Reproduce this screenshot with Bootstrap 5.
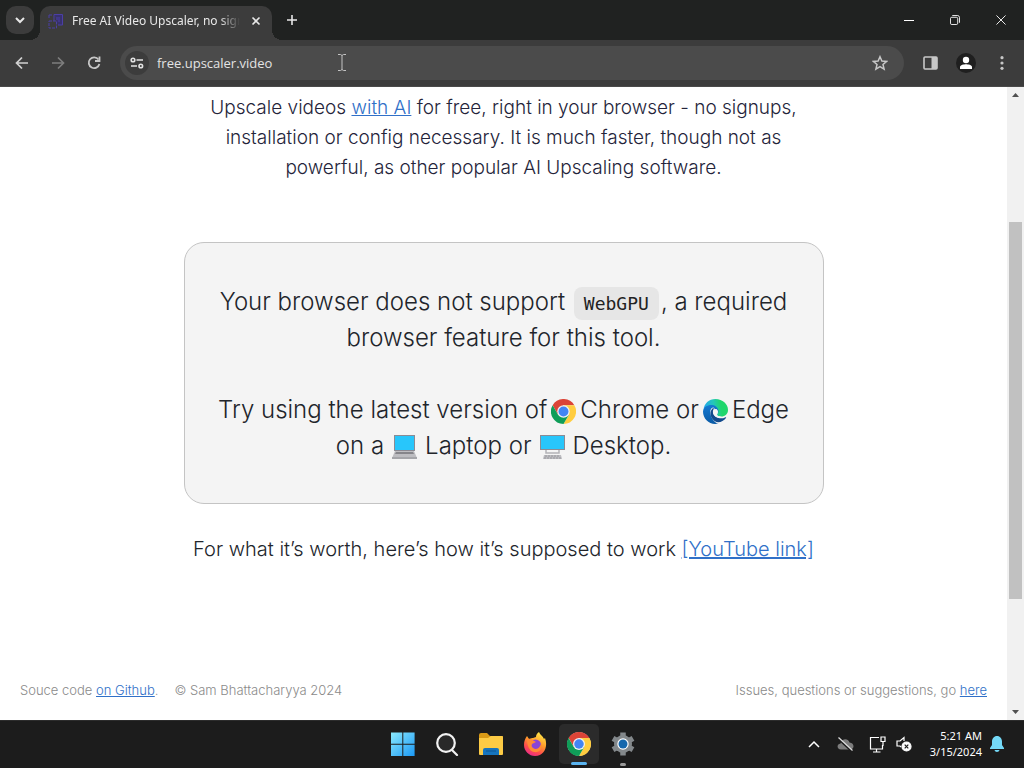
<!DOCTYPE html>
<html lang="en">
<head>
<meta charset="utf-8">
<meta name="viewport" content="width=device-width, initial-scale=1">
<title>Free AI Video Upscaler, no signup</title>
<link rel="stylesheet" href="https://cdn.jsdelivr.net/npm/bootstrap@5.3.0/dist/css/bootstrap.min.css">
<style>
  body { font-family: Inter, "Liberation Sans", sans-serif; font-weight: 300; color: #22252b; background: #fff; }
  svg { display: block; flex: none; }
  .chrome-ui, .taskbar { font-family: "Open Sans", "Noto Sans", sans-serif; font-weight: 400; }
  .plain { border: 0; padding: 0; background: none; color: inherit; display: flex; align-items: center; justify-content: center; flex: none; }

  .tabstrip { height: 40px; background: #202221; color: #e8e8e8; padding-left: 6px; }
  .tab-search { width: 28px; height: 28px; border-radius: 10px; background: #3c3c3c; margin-top: 6px; }
  .page-tab { position: relative; width: 232px; height: 34px; margin: 6px 0 0 6px; padding: 0 8px 4px; background: #3c3c3c; border-radius: 10px 10px 0 0; font-size: 12px; }
  .page-tab::before, .page-tab::after { content: ""; position: absolute; bottom: 0; width: 10px; height: 10px; }
  .page-tab::before { left: -10px; background: radial-gradient(circle at 0 0, transparent 10px, #3c3c3c 10px); }
  .page-tab::after { right: -10px; background: radial-gradient(circle at 100% 0, transparent 10px, #3c3c3c 10px); }
  .tab-title { overflow: hidden; white-space: nowrap; text-align: left; font-family: "Noto Sans", sans-serif; -webkit-mask-image: linear-gradient(90deg, #000 88%, transparent); mask-image: linear-gradient(90deg, #000 88%, transparent); }
  .tab-close { width: 16px; height: 16px; }
  .new-tab { width: 36px; height: 40px; margin-left: 2px; }
  .win-btn { width: 46px; height: 40px; color: #fff; }

  .toolbar { height: 47px; background: #3c3c3c; color: #c7c7c7; border-bottom: 1px solid #4a4a4a; padding: 0 4px; }
  .tool-btn { width: 36px; height: 34px; }
  .omnibox { position: relative; height: 34px; border-radius: 17px; background: #4b4b4b; padding: 0 6px 0 5px; }
  .site-info { width: 24px; height: 24px; border-radius: 50%; background: #3c3c3c; color: #e3e3e3; }
  .url-input { min-width: 0; border: 0; outline: 0; background: none; color: #e3e3e3; font-size: 13px; padding: 1px 0 0 8px; }
  .ibeam { position: absolute; left: 217px; top: 8px; }

  .page-body { padding: 6px 20px 20px; }
  .page-body a { color: #3070c8; }
  .intro { max-width: 600px; font-size: 19px; line-height: 30px; color: #24243a; margin: 0 auto 59px; }
  .notice { width: 100%; max-width: 640px; margin: 0 auto 30px; padding: 41px 28px 39px; border: 1px solid #c4c4c4; border-radius: 20px; background: #f4f4f4; font-size: 24px; line-height: 36px; }
  .notice p { margin: 0 0 36px; }
  .notice p:last-child { margin: 0; }
  .notice code { font: 400 18px/24px "DejaVu Sans Mono", monospace; color: #222; background: #e6e6e6; border-radius: 8px; padding: 6px 10px; margin: 0 2px; }
  .notice svg { display: inline-block; vertical-align: -6px; }
  .brand-icon { margin: 0 4px; }
  .device-icon { margin: 0 8px; }
  .worth { font-size: 20px; line-height: 30px; }
  .foot { font-size: 13px; line-height: 20px; color: #8a8a8a; }

  .scroll-col { width: 17px; background: #f1f1f1; flex: none; }
  .scroll-btn { height: 16px; }
  .thumb { flex: 377 0 0; margin: 0 2px; background: #c1c1c1; }

  .taskbar { display: grid; grid-template-columns: 1fr auto 1fr; height: 48px; background: #1c1c1c; color: #fff; border-top: 1px solid #2c2c2c; padding-bottom: 1px; }
  .app-row { padding-left: 1px; }
  .app-btn { position: relative; width: 44px; height: 46px; }
  .app-open { background: #2b2b2b; border-radius: 5px; width: 40px; height: 40px; margin: 3px 2px; }
  .run-mark { position: absolute; bottom: 1px; width: 6px; height: 3px; border-radius: 2px; background: #9a9a9a; }
  .app-open .run-mark { width: 16px; bottom: -1px; background: #5ab4f0; }
  .tray-btn { width: 32px; }
  .tray-volume { width: 20px; }
  .clock { font-family: "Noto Sans", sans-serif; font-size: 11px; line-height: 16px; margin: 0 8px 0 16px; }
</style>
</head>
<body>
<svg width="0" height="0" class="position-absolute" aria-hidden="true">
  <defs>
    <symbol id="chrome-logo" viewBox="0 0 48 48">
      <circle cx="24" cy="24" r="23.500" fill="#fff"/>
      <path d="M24 12H44.800A24 24 0 0 0 3.200 12L13.600 30Z" fill="#db4437"/>
      <path d="M34.400 30L24 48A24 24 0 0 0 44.800 12H24Z" fill="#ffcd40"/>
      <path d="M13.600 30L3.200 12A24 24 0 0 0 24 48L34.400 30Z" fill="#0f9d58"/>
      <circle cx="24" cy="24" r="12" fill="#f1f1f1"/>
      <circle cx="24" cy="24" r="9.500" fill="#4285f4"/>
    </symbol>
  </defs>
</svg>

<div class="d-flex flex-column min-vh-100">
  <header class="chrome-ui">
    <div class="tabstrip d-flex">
      <button class="plain tab-search" aria-label="Search tabs"><svg width="12" height="12" viewBox="0 0 12 12" fill="none" stroke="currentColor" stroke-width="2"><path d="M2 4l4 4 4-4"/></svg></button>
      <div class="page-tab d-flex align-items-center">
        <svg width="16" height="16" viewBox="0 0 16 16" fill="none" stroke="#4b3fa6"><path d="M6 1.500H14.500V12H10M6 1.500V8" fill="#38316e"/><path d="M1 8H8.500V15H1Z" stroke-dasharray="3 1"/><path d="M1 5V2H4M11 4V9M9 4V7" /></svg>
        <span class="tab-title flex-fill ms-2">Free AI Video Upscaler, no signup</span>
        <button class="plain ms-2 tab-close" aria-label="Close tab"><svg width="10" height="10" viewBox="0 0 10 10" stroke="currentColor" stroke-width="1.600"><path d="M1.500 1.500l7 7M8.500 1.500l-7 7"/></svg></button>
      </div>
      <button class="plain new-tab" aria-label="New tab"><svg width="12" height="12" viewBox="0 0 12 12" stroke="currentColor" stroke-width="1.600"><path d="M6 1v10M1 6h10"/></svg></button>
      <div class="d-flex ms-auto">
        <button class="plain win-btn" aria-label="Minimize"><svg width="10" height="10" stroke="currentColor"><path d="M0 5.500h10"/></svg></button>
        <button class="plain win-btn" aria-label="Restore"><svg width="10" height="10" viewBox="0 0 11 11" fill="none" stroke="currentColor"><rect x=".5" y="2.500" width="8" height="8" rx="1.500"/><path d="M2.500.5H8A2.500 2.500 0 0 1 10.500 3V8.500"/></svg></button>
        <button class="plain win-btn" aria-label="Close"><svg width="10" height="10" viewBox="0 0 11 11" stroke="currentColor"><path d="M.5.5l10 10M10.500.5l-10 10"/></svg></button>
      </div>
    </div>
    <div class="toolbar d-flex align-items-center">
      <button class="plain tool-btn" aria-label="Back"><svg width="14" height="14" viewBox="0 0 14 14" fill="none" stroke="#d0d0d0" stroke-width="1.700"><path d="M13 7H2M7 1.500L1.500 7 7 12.500"/></svg></button>
      <button class="plain tool-btn" aria-label="Forward"><svg width="14" height="14" viewBox="0 0 14 14" fill="none" stroke="#7d7d7d" stroke-width="1.700"><path d="M1 7h11M7 1.500L12.500 7 7 12.500"/></svg></button>
      <button class="plain tool-btn" aria-label="Reload"><svg width="14" height="14" viewBox="0 0 14 14" fill="none" stroke="currentColor" stroke-width="1.800"><path d="M11.500 3.500A5.400 5.400 0 1 0 12.400 8"/><path d="M12.500.5V5H8"/></svg></button>
      <div class="omnibox d-flex align-items-center flex-fill ms-2">
        <button class="plain site-info" aria-label="View site information"><svg width="14" height="12" viewBox="0 0 14 12" fill="none" stroke="currentColor" stroke-width="1.600"><circle cx="3" cy="3" r="1.800"/><path d="M6.500 3H13M1 9H7"/><circle cx="10.800" cy="9" r="1.800"/></svg></button>
        <input class="url-input flex-fill" type="text" value="free.upscaler.video" aria-label="Address and search bar">
        <svg class="ibeam" width="10" height="17" viewBox="0 0 10 17" fill="none" stroke="#c4c4c4"><path d="M1 .5H3.500L5 1.500 6.500.5H9M5 1.500v14M1 16.500H3.500L5 15.500 6.500 16.500H9"/></svg>
        <button class="plain tool-btn" aria-label="Bookmark this tab"><svg width="16" height="16" viewBox="0 0 16 16" fill="none" stroke="currentColor" stroke-width="1.500"><path d="M8 1.700L9.900 6l4.700.4-3.600 3.100 1.100 4.600L8 11.700l-4.100 2.400L5 9.500 1.400 6.400 6.100 6Z"/></svg></button>
      </div>
      <button class="plain tool-btn ms-2" aria-label="Side panel"><svg width="15" height="14" viewBox="0 0 15 14"><rect x="1" y="1" width="13" height="12" rx="1" fill="none" stroke="currentColor" stroke-width="1.600"/><path d="M8.500 1H14V13H8.500Z" fill="currentColor"/></svg></button>
      <button class="plain tool-btn" aria-label="Profile"><svg width="20" height="20" viewBox="0 0 20 20"><circle cx="10" cy="10" r="10" fill="#1f1f1f"/><g fill="#fff"><circle cx="10" cy="7" r="3.200"/><path d="M4 16V14C4 12 8 11.300 10 11.300S16 12 16 14V16Z"/></g></svg></button>
      <button class="plain tool-btn" aria-label="Menu"><svg width="4" height="14" viewBox="0 0 4 14" fill="currentColor"><circle cx="2" cy="1.700" r="1.600"/><circle cx="2" cy="7" r="1.600"/><circle cx="2" cy="12.300" r="1.600"/></svg></button>
    </div>
  </header>

  <div class="d-flex flex-fill">
    <main class="page-body d-flex flex-column flex-fill">
      <p class="intro text-center">Upscale videos <a href="#ai">with AI</a> for free, right in your browser - no signups, installation or config necessary. It is much faster, though not as powerful, as other popular AI Upscaling software.</p>
      <section class="notice text-center">
        <p>Your browser does not support <code>WebGPU</code>, a required browser feature for this tool.</p>
        <p>Try using the latest version of<svg class="brand-icon" width="25" height="25"><use href="#chrome-logo"/></svg>Chrome or<svg class="brand-icon" width="25" height="25" viewBox="0 0 50 50"><defs><linearGradient id="eg" x1="0" x2="1" y1=".3" y2=".2"><stop stop-color="#22a7ec"/><stop offset=".4" stop-color="#25c6bb"/><stop offset=".7" stop-color="#1fd66c"/></linearGradient><linearGradient id="eb" x1="0" x2="0" y1="0" y2="1"><stop stop-color="#1479d2"/><stop offset="1" stop-color="#0a5aa5"/></linearGradient></defs><path d="M1 22C2 9 12 0 25 0C39 0 50 10 50 22C50 30 44 35 37 35C31 35 27 33 28 31C31 28 31 24 28 20C22 11 9 11 1 22Z" fill="url(#eg)"/><path d="M0 25C1 15 10 11 19 12C26 13 31 19 31 25C31 28 28 30 28 31C22 26 26 18 20 17C13 18 13 31 19 40C22 45 27 49 31 49C14 53 0 41 0 25Z" fill="url(#eb)"/><path d="M20 18C12 25 14 37 23 44C31 50 40 45 46 38C47 36 46 36 44 37C36 41 23 38 20 28C19 24 21 21 22 19Z" fill="#124a8c"/><path d="M20 27C20 22 23 19 27 20C31 23 31 28 28 31C28 33 31 35 35 35L34 38C26 38 21 33 20 27Z" fill="#f4f4f4"/></svg>Edge
          on a<svg class="device-icon" width="25" height="25" viewBox="0 0 25 25"><path d="M2 0H23V16H2Z" fill="#8b8b94"/><path d="M3 1H22V15H3Z" fill="#28c6fb"/><path d="M3 16H22L25 23H0Z" fill="#bdbdc1"/><path d="M4 17H21L22 19H3Z" fill="#85858a"/><path d="M0 22H25V24H0Z" fill="#a5a6aa"/></svg>Laptop or<svg class="device-icon" width="25" height="25" viewBox="0 0 25 25"><path d="M0 0H25V15H0Z" fill="#8b8b94"/><path d="M1 1H24V14H1Z" fill="#28c6fb"/><path d="M6 15V18H19V15" fill="none" stroke="#b3b3b7" stroke-width="1.500"/><path d="M4 20H21L22 24H3Z" fill="#bdbdc1"/><path d="M5 21H20M4 23H21" stroke="#98989d" stroke-dasharray="2 1"/></svg>Desktop.</p>
      </section>
      <p class="worth text-center mb-4">For what it’s worth, here’s how it’s supposed to work <a href="#youtube">[YouTube link]</a></p>
      <footer class="foot d-flex justify-content-between mt-auto">
        <div class="d-flex gap-3"><span>Souce code <a href="#github">on Github</a>.</span><span>© Sam Bhattacharyya 2024</span></div>
        <div>Issues, questions or suggestions, go <a href="#issues">here</a></div>
      </footer>
    </main>
    <div class="scroll-col d-flex flex-column" aria-hidden="true">
      <div class="scroll-btn d-flex align-items-center justify-content-center"><svg width="7" height="4"><path d="M0 4L3.500 0 7 4Z" fill="#505050"/></svg></div>
      <div style="flex:119 0 0"></div>
      <div class="thumb"></div>
      <div style="flex:105 0 0"></div>
      <div class="scroll-btn d-flex align-items-center justify-content-center"><svg width="7" height="4"><path d="M0 0L3.500 4 7 0Z" fill="#505050"/></svg></div>
    </div>
  </div>

  <nav class="taskbar" aria-label="Taskbar">
    <div></div>
    <div class="app-row d-flex">
      <button class="plain app-btn" aria-label="Start"><svg width="24" height="24" viewBox="0 0 24 24"><defs><linearGradient id="wg" gradientUnits="userSpaceOnUse" x1="0" y1="0" x2="24" y2="24"><stop stop-color="#8ceafd"/><stop offset="1" stop-color="#1a98f5"/></linearGradient></defs><path d="M0 .5h11.300v11.300H0zM12.300.5H23.600v11.300H12.300zM0 12.800h11.300V24H0zM12.300 12.800H23.600V24H12.300z" fill="url(#wg)"/></svg></button>
      <button class="plain app-btn" aria-label="Search"><svg width="24" height="24" viewBox="0 0 24 24" fill="#292929" stroke="#f2f2f2" stroke-width="2.200"><path d="M17 18l5 5" stroke-linecap="round"/><circle cx="11" cy="11" r="8.800"/></svg></button>
      <button class="plain app-btn" aria-label="File Explorer"><svg width="26" height="24" viewBox="0 0 26 24"><path d="M1 3Q1 1 3 1H9L12 4H24Q25 4 25 6V12H1Z" fill="#d99a16"/><path d="M1 6H10L13 4H24Q25 4 25 5V22Q25 23 24 23H2Q1 23 1 22Z" fill="#fccb45"/><path d="M5 23V18Q5 16 7 16H19Q21 16 21 18V23Z" fill="#1674bd"/><path d="M8 19H18" stroke="#0c5492"/></svg></button>
      <button class="plain app-btn" aria-label="Firefox"><svg width="24" height="24" viewBox="0 0 24 24"><defs><linearGradient id="fg" x1=".8" y1="0" x2=".3" y2="1"><stop stop-color="#fff04b"/><stop offset=".45" stop-color="#ff9a2a"/><stop offset=".75" stop-color="#ff4a4e"/><stop offset="1" stop-color="#e92b8c"/></linearGradient></defs><path d="M1 13C1 9 2 7 4 4L6 7C8 6 9 6 10 6L13 5C13 3 14 1 16 0C17 3 20 4 21 7L22 6C25 14 22 24 12 24C6 24 1 19 1 13Z" fill="url(#fg)"/><circle cx="12.500" cy="13" r="5.500" fill="#8a45d6"/><path d="M4 7C7 6 9 8 13 10L9 12C8 14 9 16 12 17C15 17 17 15 18 12C20 17 16 21 11 20C6 19 4 13 4 7Z" fill="#ff8b35"/></svg></button>
      <button class="plain app-btn app-open" aria-label="Google Chrome"><svg width="24" height="24"><use href="#chrome-logo"/></svg><span class="run-mark"></span></button>
      <button class="plain app-btn" aria-label="Settings"><svg width="24" height="24" viewBox="0 0 24 24"><circle cx="12" cy="12" r="9" fill="#83888b"/><g stroke="#83888b" stroke-width="5.500"><path d="M12 .5V23.500M2 6.300L22 17.700M2 17.700L22 6.300"/></g><circle cx="12" cy="12" r="5.700" fill="#fff"/><circle cx="12" cy="12" r="4.500" fill="#1668ad"/></svg><span class="run-mark"></span></button>
    </div>
    <div class="d-flex align-items-center justify-content-end pe-3">
      <button class="plain tray-btn" aria-label="Show hidden icons"><svg width="12" height="8" viewBox="0 0 12 8" fill="none" stroke="currentColor" stroke-width="1.500"><path d="M1 7l5-5 5 5"/></svg></button>
      <button class="plain tray-btn" aria-label="OneDrive"><svg width="17" height="14" viewBox="0 0 17 14"><path d="M4 12.500C-.5 12.500-.5 7 3.500 6.500C5 1 11 1 12.500 5.500C18 6 17.500 12.500 13 12.500Z" fill="#7d7d7d"/><path d="M1.500 2L14 13.500" stroke="#1c1c1c" stroke-width="2"/><path d="M1.500.5L15.500 13.500" stroke="#e0e0e0" stroke-width="1.200"/></svg></button>
      <button class="plain tray-btn" aria-label="Network"><svg width="17" height="17" viewBox="0 0 17 17" fill="none" stroke="currentColor" stroke-width="1.200"><path d="M10 1.500H1.500V13H13.500V9M7.500 13V16M4 16H11.500M12 1H16V5.500H12ZM14 5.500V10"/></svg></button>
      <button class="plain tray-volume" aria-label="Volume muted"><svg width="16" height="16" viewBox="0 0 16 16" fill="none" stroke="currentColor" stroke-width="1.200"><path d="M8 5V1.500L4 5H1V10H4L5 11"/><circle cx="10.500" cy="10.500" r="4.500" fill="#fff"/><path d="M8.700 8.700l3.600 3.600M12.300 8.700l-3.600 3.600" stroke="#1c1c1c"/></svg></button>
      <button class="plain clock text-end"><span>5:21 AM<br>3/15/2024</span></button>
      <button class="plain" aria-label="Notifications"><svg class="me-1" width="14" height="16" viewBox="0 0 14 16" fill="#74d9f7"><path d="M7 0C4 0 2 2.500 2 5.500V9L0 12V13H14V12L12 9V5.500C12 2.500 10 0 7 0ZM4.500 14H9.500C9 16.600 5 16.600 4.500 14Z"/></svg></button>
    </div>
  </nav>
</div>
<script src="https://cdn.jsdelivr.net/npm/bootstrap@5.3.0/dist/js/bootstrap.bundle.min.js"></script>
</body>
</html>
